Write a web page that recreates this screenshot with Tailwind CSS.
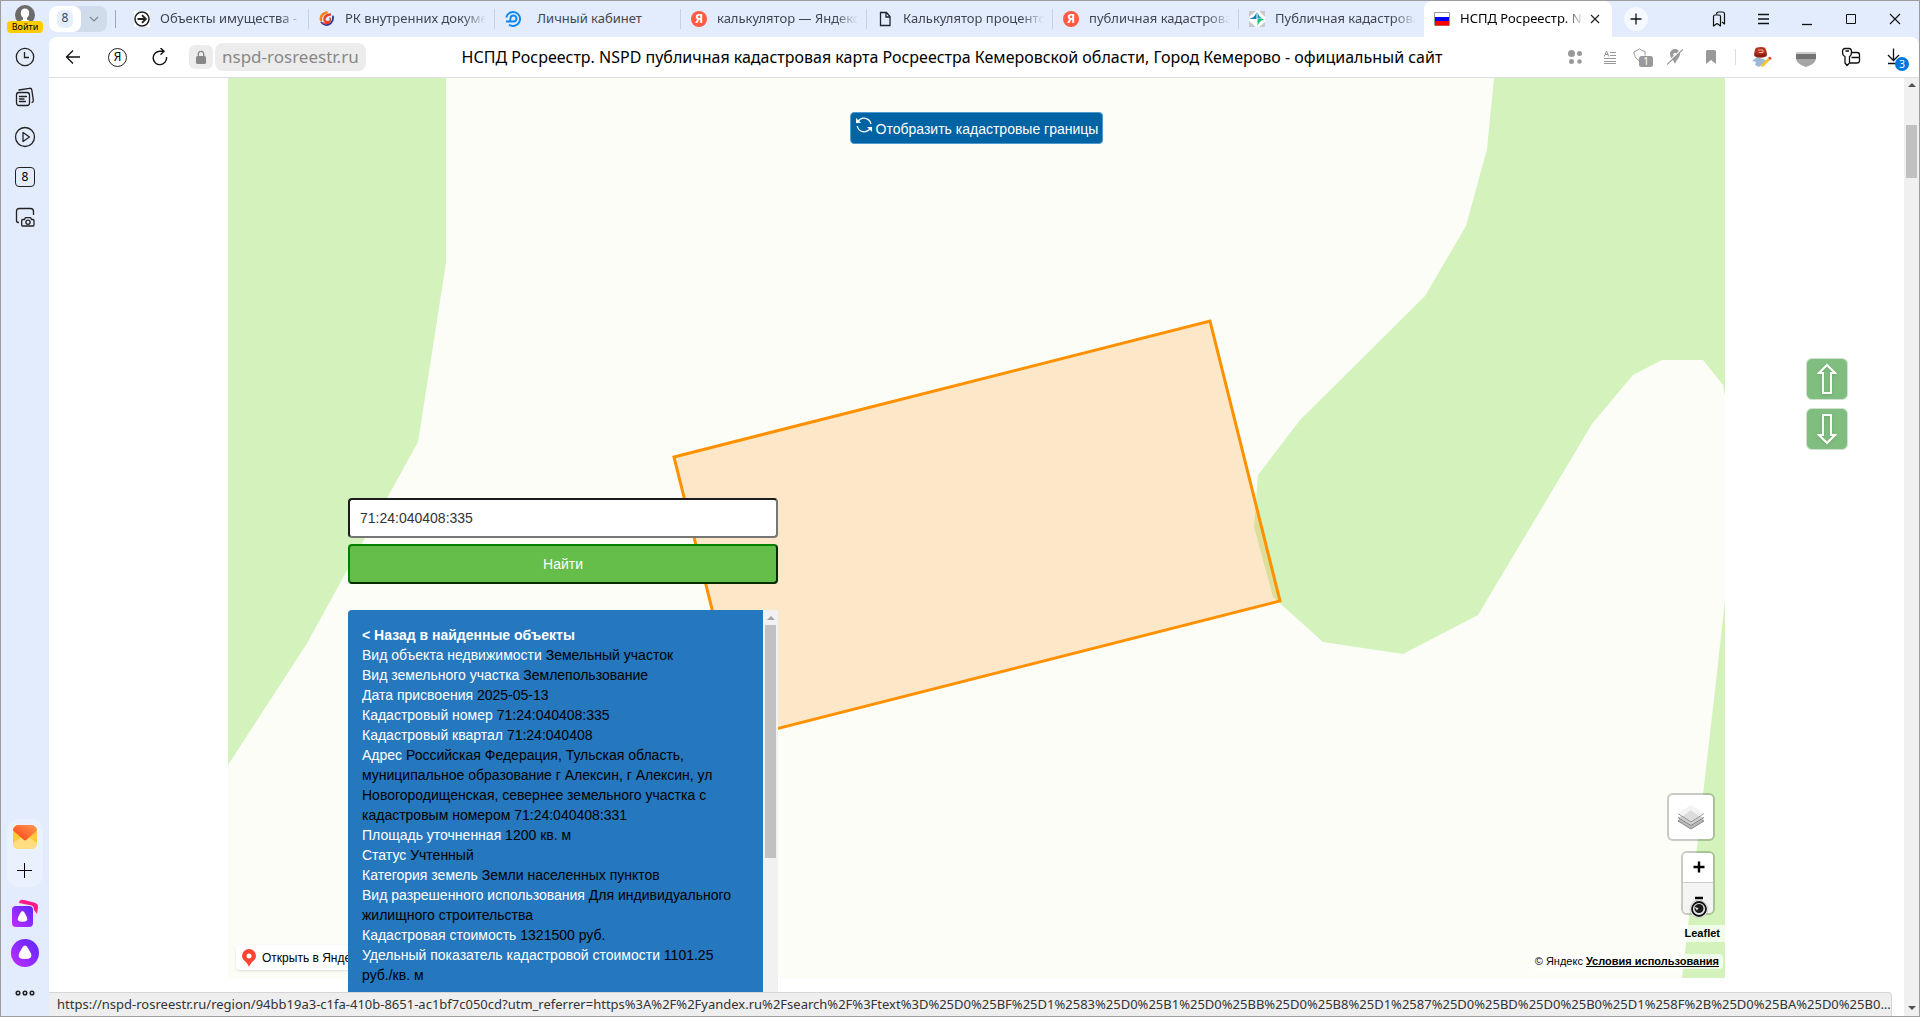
<!DOCTYPE html>
<html lang="ru">
<head>
  <meta charset="UTF-8" />
  <meta name="viewport" content="width=device-width, initial-scale=1.0" />
  <title>НСПД Росреестр. NSPD публичная кадастровая карта</title>
  <script src="https://cdn.jsdelivr.net/npm/@tailwindcss/browser@4"></script>
</head>
<body class="h-screen overflow-hidden bg-[#e2ecfd] border border-[#9d9d9d] flex font-['Noto_Sans',sans-serif] text-black">

  <!-- Sidebar -->
  <aside class="w-12 shrink-0 flex flex-col items-center">
    <button class="mt-1 flex flex-col items-center" aria-label="Войти">
      <svg class="w-5 h-5" viewBox="0 0 20 20"><circle cx="10" cy="10" r="10" fill="#6b6b6b"/><path d="M10 3.500c-2.700 0-4.200 1.900-4.200 4.500 0 2.200 1 3.900 2.200 4.800v1.700L4.500 16.500v3.500h11v-3.500L12 14.500v-1.700c1.200-.9 2.200-2.600 2.200-4.800 0-2.600-1.500-4.500-4.200-4.500z" fill="#fff"/></svg>
      <span class="-mt-1 w-9 h-3 rounded-sm bg-[#ffcc00] text-[9px] leading-3 text-center relative">Войти</span>
    </button>
    <nav class="mt-3 flex flex-col items-center gap-4">
      <button class="w-6 h-6 flex items-center justify-center" aria-label="История">
        <svg class="w-5 h-5" viewBox="0 0 20 20" fill="none" stroke="#222" stroke-width="1.300"><circle cx="10" cy="10" r="8.700"/><path d="M9.500 5v5.500H14"/></svg>
      </button>
      <button class="w-6 h-6 flex items-center justify-center" aria-label="Коллекции">
        <svg class="w-5 h-5" viewBox="0 0 20 20" fill="none" stroke="#222" stroke-width="1.300" stroke-linecap="round"><rect x="1.500" y="5.500" width="13" height="13" rx="2.500"/><path d="M4.500 9.500h7M4.500 12h4.500M4.500 14.500h6M4 3l10.500-1.700q2-.3 2.300 1.600l1.500 10.300q.2 1.800-1.300 2.200"/></svg>
      </button>
      <button class="w-6 h-6 flex items-center justify-center" aria-label="Видео">
        <svg class="w-6 h-6" viewBox="0 0 24 24" fill="none" stroke="#222" stroke-width="1.300" stroke-linejoin="round"><circle cx="12" cy="12" r="9.500"/><path d="M10 7.500v9l6.500-4.500z"/></svg>
      </button>
      <button class="w-5 h-5 my-0.5 rounded-sm border border-[#222] text-xs leading-4 text-center">8</button>
      <button class="w-6 h-6 flex items-center justify-center" aria-label="Скриншот">
        <svg class="w-6 h-6" viewBox="0 0 24 24" fill="none" stroke="#222" stroke-width="1.300" stroke-linejoin="round"><path d="M6 17.500H5.500q-2 0-2-2v-9q0-3 3-3h11q3 0 3 3v3.500"/><path d="M9.500 21q-.8 0-.8-1v-4.500q0-1 1-1h1.800l1-1.900h5l1 1.900h1.500q1 0 1 1V20q0 1-1 1z"/><circle cx="15" cy="17.200" r="2.100"/></svg>
      </button>
    </nav>
    <div class="mt-auto w-9 h-[68px] rounded-xl bg-[#eaf1fe] flex flex-col items-center pt-1.5 gap-3">
      <button aria-label="Почта">
        <svg class="w-6 h-6" viewBox="0 0 24 24"><defs><linearGradient id="mail" x1="1" y1="0" x2="0" y2="1"><stop offset="0" stop-color="#ff9a5a"/><stop offset="1" stop-color="#ff3d0a"/></linearGradient></defs><rect width="24" height="24" rx="6" fill="#ffc93a"/><path d="M0 18L12 10l12 8q0 6-6 6H6q-6 0-6-6z" fill="#ffdd80"/><path d="M0 5.500Q.5 0 6 0h12q5.500 0 6 5.500L13 15q-1 .8-2 0z" fill="url(#mail)"/></svg>
      </button>
      <button aria-label="Добавить"><svg class="w-5 h-5" viewBox="0 0 20 20" stroke="#000" stroke-width="1"><path d="M2 9.500h15M9.500 2v15"/></svg></button>
    </div>
    <div class="mt-3 flex flex-col items-center gap-3">
      <button aria-label="Алиса">
        <svg class="w-7 h-7" viewBox="0 0 28 28"><defs><linearGradient id="alice" x1="1" y1="0" x2="0" y2="1"><stop offset="0" stop-color="#5a28ff"/><stop offset="1" stop-color="#c22cff"/></linearGradient></defs><path d="M8 4q.5-4 5-3l10 2.500q4.500 1 4 5L26 15l-3-4q0-5-5-5z" fill="#ff1a8c"/><rect x="1" y="7" width="21" height="21" rx="4" fill="url(#alice)"/><path d="M11.500 12q-1.500 0-2.500 2.500l-2 4q-1.500 4.300 4.500 4.300t4.500-4.300l-2-4Q13 12 11.500 12z" fill="#fff"/></svg>
      </button>
      <button aria-label="Алиса, голос">
        <svg class="w-7 h-7" viewBox="0 0 28 28"><circle cx="14" cy="14" r="14" fill="url(#alice)"/><path d="M14 6.500q-1.800 0-3.200 3l-2.800 5q-2 5.500 6 5.500t6-5.500l-2.800-5q-1.400-3-3.200-3z" fill="#fff"/></svg>
      </button>
      <button class="mt-2 mb-[17px]" aria-label="Ещё">
        <svg class="w-5 h-3" viewBox="0 0 20 12" fill="none" stroke="#222" stroke-width="1.500"><circle cx="3" cy="6" r="1.800"/><circle cx="10" cy="6" r="1.800"/><circle cx="17" cy="6" r="1.800"/></svg>
      </button>
    </div>
  </aside>

  <div class="grow min-w-0 flex flex-col">
    <!-- Tabs -->
    <header class="h-9 shrink-0 flex items-center text-[13px] text-[#3f4750]">
      <div class="h-[26px] w-[58px] shrink-0 rounded-lg bg-[#d1dceb] flex">
        <button class="w-8 rounded-lg bg-white flex items-center justify-center text-xs"><span class="w-4 h-[18px] rounded-md bg-[#e4eefd]">8</span></button>
        <button class="grow flex items-center justify-center" aria-label="Список вкладок"><svg class="w-2.5 h-2.5" viewBox="0 0 10 10" fill="none" stroke="#7b8490" stroke-width="1.200"><path d="M1 3l4 4 4-4"/></svg></button>
      </div>
      <span class="ml-2 w-px h-[18px] bg-[#9aa5b5] shrink-0"></span>
      <button class="ml-2 flex-1 max-w-[184px] min-w-0 h-full flex items-center gap-2.5 pl-2.5">
        <svg class="w-4 h-4 shrink-0" viewBox="0 0 16 16" fill="none" stroke="#222"><rect width="16" height="16" fill="#fff" stroke="none"/><circle cx="8" cy="8" r="7" stroke-width="1.500"/><path d="M3.500 8h8M8 4.200L11.800 8 8 11.800" stroke-width="1.900"/></svg>
        <span class="grow overflow-hidden whitespace-nowrap text-left mr-1.5 [mask-image:linear-gradient(to_right,black_84%,transparent)]">Объекты имущества - С</span>
      </button>
      <button class="flex-1 max-w-[186px] min-w-0 h-full flex items-center gap-2.5 pl-2.5">
        <span class="-ml-2.5 w-px h-5 bg-[#c6d1e2] shrink-0"></span>
        <svg class="w-4 h-4 shrink-0" viewBox="0 0 16 16" fill="none" stroke-linecap="round"><path d="M7.500 1.500Q1 3.500 2 9" stroke="#f58220" stroke-width="2.600"/><path d="M11 3.500Q5 4.500 5.500 9q.8 2.500 3.500 2" stroke="#e8402a" stroke-width="2.400"/><path d="M2.500 11.500q4.500 5 9.500.5 2.500-2.700 2-6.500" stroke="#2b3990" stroke-width="1.800"/><path d="M4.500 12q4 1.500 6-1 1.500-2 .5-4" stroke="#e8402a" stroke-width="1.600"/></svg>
        <span class="grow overflow-hidden whitespace-nowrap text-left mr-2 [mask-image:linear-gradient(to_right,black_84%,transparent)]">РК внутренних докумен</span>
      </button>
      <button class="flex-1 max-w-[186px] min-w-0 h-full flex items-center gap-2.5 pl-2.5">
        <span class="-ml-2.5 w-px h-5 bg-[#c6d1e2] shrink-0"></span>
        <svg class="w-4 h-4 shrink-0" viewBox="0 0 16 16" fill="none" stroke="#0d87f2" stroke-width="1.900"><path d="M1.200 6.500A7 7 0 1 1 4 13.700"/><path d="M1 10.500h7.500a3 3 0 1 0-3-3q0 2.500-1.500 3"/></svg>
        <span class="grow overflow-hidden whitespace-nowrap text-left ml-1.5 mr-2">Личный кабинет</span>
      </button>
      <button class="flex-1 max-w-[186px] min-w-0 h-full flex items-center gap-2.5 pl-2.5">
        <span class="-ml-2.5 w-px h-5 bg-[#c6d1e2] shrink-0"></span>
        <span class="w-4 h-4 rounded-full bg-[#ff5a42] shrink-0 text-white text-xs leading-4 font-bold text-center">Я</span>
        <span class="grow overflow-hidden whitespace-nowrap text-left mr-2 [mask-image:linear-gradient(to_right,black_84%,transparent)]">калькулятор — Яндекс:</span>
      </button>
      <button class="flex-1 max-w-[186px] min-w-0 h-full flex items-center gap-2.5 pl-2.5">
        <span class="-ml-2.5 w-px h-5 bg-[#c6d1e2] shrink-0"></span>
        <svg class="w-4 h-4 shrink-0" viewBox="0 0 16 16" fill="none" stroke="#1d2733" stroke-width="1.300"><path d="M3.500 1.500h6l3.500 4v9H3.500zM9 1.500V6h4"/></svg>
        <span class="grow overflow-hidden whitespace-nowrap text-left mr-2 [mask-image:linear-gradient(to_right,black_84%,transparent)]">Калькулятор процентов</span>
      </button>
      <button class="flex-1 max-w-[186px] min-w-0 h-full flex items-center gap-2.5 pl-2.5">
        <span class="-ml-2.5 w-px h-5 bg-[#c6d1e2] shrink-0"></span>
        <span class="w-4 h-4 rounded-full bg-[#ff5a42] shrink-0 text-white text-xs leading-4 font-bold text-center">Я</span>
        <span class="grow overflow-hidden whitespace-nowrap text-left mr-2 [mask-image:linear-gradient(to_right,black_84%,transparent)]">публичная кадастровая</span>
      </button>
      <button class="flex-1 max-w-[186px] min-w-0 h-full flex items-center gap-2.5 pl-2.5">
        <span class="-ml-2.5 w-px h-5 bg-[#c6d1e2] shrink-0"></span>
        <svg class="w-4 h-4 shrink-0" viewBox="0 0 16 16"><rect width="16" height="16" fill="#fff"/><path d="M0 0h7L0 6zM16 0v6l-6-6zM0 16v-6l7 6zM16 16h-6l6-5z" fill="#c9c9c9"/><path d="M7.500 1v7H0q6-1.500 7.500-7z" fill="#0d7fc4"/><path d="M8.500 15.500V8H16q-6 1.500-7.500 7.500z" fill="#10c777"/><path d="M8.500 1v6.500H14q-4.500-1.500-5.500-6.500z" fill="#0a9ba8"/></svg>
        <span class="grow overflow-hidden whitespace-nowrap text-left mr-2 [mask-image:linear-gradient(to_right,black_84%,transparent)]">Публичная кадастровая</span>
      </button>
      <div class="flex-1 max-w-[188px] min-w-0 h-full rounded-t-lg bg-white flex items-center gap-2.5 pl-2.5 pr-3 text-black">
        <svg class="w-4 h-4 shrink-0" viewBox="0 0 16 16"><path d="M.5 1.500h15v13H.5z" fill="#fff" stroke="#999"/><path d="M1 6h14v4H1z" fill="#00f"/><path d="M1 10h14v4.500H1z" fill="#f00"/></svg>
        <span class="grow -mr-1 overflow-hidden whitespace-nowrap [mask-image:linear-gradient(to_right,black_84%,transparent)]">НСПД Росреестр. NSPD</span>
        <button aria-label="Закрыть вкладку"><svg class="w-2.5 h-2.5" viewBox="0 0 10 10" stroke="#222" stroke-width="1.200"><path d="M1 1l8 8M9 1L1 9"/></svg></button>
      </div>
      <button class="ml-3 w-6 h-6 rounded-full bg-[#f5f9ff] flex items-center justify-center shrink-0" aria-label="Новая вкладка"><svg class="w-3 h-3" viewBox="0 0 12 12" stroke="#111" stroke-width="1.300"><path d="M6 .5v11M.5 6h11"/></svg></button>
      <div class="ml-auto mr-4 flex items-center gap-7 shrink-0">
        <button aria-label="Закладки"><svg class="w-4 h-4" viewBox="0 0 16 16" fill="none" stroke="#111" stroke-width="1.200" stroke-linejoin="round"><path d="M2.500 5.500q0-1.500 1.500-1.500h4q1.500 0 1.500 1.500V15L6 12.500 2.500 15z"/><path d="M5.500 3.500q0-2.500 2-2.500h4q2 0 2 2v10l-2.500-2"/></svg></button>
        <button aria-label="Меню"><svg class="w-4 h-4" viewBox="0 0 16 16" stroke="#111" stroke-width="1.300"><path d="M3 3.500h11M3 8h11M3 12.500h11"/></svg></button>
        <button aria-label="Свернуть"><svg class="w-4 h-4" viewBox="0 0 16 16" stroke="#111" stroke-width="1.300"><path d="M3 13.500h10"/></svg></button>
        <button aria-label="Развернуть"><svg class="w-4 h-4" viewBox="0 0 16 16" fill="none" stroke="#111"><path d="M3.500 3.500h9v9h-9z"/></svg></button>
        <button aria-label="Закрыть"><svg class="w-4 h-4" viewBox="0 0 16 16" stroke="#111" stroke-width="1.100"><path d="M3 3l10 10M13 3L3 13"/></svg></button>
      </div>
    </header>

    <!-- Toolbar -->
    <div class="h-[41px] shrink-0 bg-white rounded-t-lg border-b border-[#dedede] flex items-center">
      <div class="flex-1 flex items-center">
        <button class="ml-4" aria-label="Назад"><svg class="w-4 h-4" viewBox="0 0 16 16" fill="none" stroke="#111" stroke-width="1.300"><path d="M15 8H1.500M8 1.500L1.500 8 8 14.500"/></svg></button>
        <button class="ml-[27px] w-[19px] h-[19px] rounded-full border border-[#222] text-xs leading-4 text-center" aria-label="Яндекс">Я</button>
        <button class="ml-6" aria-label="Обновить"><svg class="w-[18px] h-[18px]" viewBox="0 0 18 18" fill="none" stroke="#111" stroke-width="1.400"><path d="M15.500 9A6.700 6.700 0 1 1 9 3.200h3.500M9.500 0l3.500 3.200-3.500 3.500"/></svg></button>
        <button class="ml-5 w-6 h-6 rounded-md bg-[#ececec] flex items-center justify-center" aria-label="Защищено"><svg class="w-3 h-3.5" viewBox="0 0 12 14"><rect x="1" y="6" width="10" height="8" rx="1.500" fill="#888"/><path d="M3.300 6V4a2.700 2.700 0 0 1 5.400 0v2" fill="none" stroke="#888" stroke-width="1.300"/></svg></button>
        <button class="ml-0.5 h-7 px-[7px] rounded-lg bg-[#ececec] text-[#888] text-[17px] leading-7">nspd-rosreestr.ru</button>
      </div>
      <h1 class="mr-[52px] text-base whitespace-nowrap">НСПД Росреестр. NSPD публичная кадастровая карта Росреестра Кемеровской области, Город Кемерово - официальный сайт</h1>
      <div class="flex-1 flex items-center justify-end pr-3">
        <button aria-label="Расширения"><svg class="w-4 h-4" viewBox="0 0 16 16" fill="#999"><circle cx="4.500" cy="4.500" r="3.500"/><circle cx="12.500" cy="4.500" r="2.500"/><circle cx="4.500" cy="12.500" r="2.500"/><circle cx="12.500" cy="12.500" r="2.200"/></svg></button>
        <button class="ml-5" aria-label="Режим чтения"><svg class="w-3.5 h-4" viewBox="0 0 14 16" fill="none" stroke="#999" stroke-width="1"><path d="M7 3.500h6M7 6.500h6M1 9.500h12M1 12.500h12M1 14.500h12M1.200 7.500L3.500 2l2.300 5.500M2 5.500h3"/></svg></button>
        <button class="ml-4" aria-label="Защита"><svg class="w-5 h-5" viewBox="0 0 20 20" fill="none"><path d="M6.500 14Q.8 10.500 1 4.500q3.500-.5 5.500-2.700 2 2.200 5.500 2.700v4" stroke="#999"/><rect x="6" y="9" width="14" height="11" rx="2.500" fill="#999"/><text x="13" y="18" font-size="10" fill="#fff" text-anchor="middle">1</text></svg></button>
        <button class="ml-3.5" aria-label="Местоположение"><svg class="w-4 h-4" viewBox="0 0 16 16"><path d="M8 0a5 5 0 0 0-5 5c0 3 3 5 5 10 2-5 5-7 5-10a5 5 0 0 0-5-5z" fill="#999"/><circle cx="8" cy="5.500" r="1.700" fill="#fff"/><path d="M0 14L14.500.5" stroke="#fff" stroke-width="1.200"/><path d="M0 15.500L16 .5" stroke="#999" stroke-width="1.200"/></svg></button>
        <button class="ml-5" aria-label="В закладки"><svg class="w-4 h-4" viewBox="0 0 16 16"><path d="M3 2.500Q3 1 4.500 1h7Q13 1 13 2.500V15l-5-4-5 4z" fill="#999"/></svg></button>
        <span class="ml-4 w-px h-4 bg-[#ddd]"></span>
        <button class="ml-4" aria-label="Блокировщик"><svg class="w-5 h-5" viewBox="0 0 20 20"><path d="M0 14l5-4 9 3-3 4-4 3-4-2 1-3z" fill="#9dbbd6"/><path d="M4 .8q5.500-1.600 9 0 2.500 4 1.500 8.200-6 3-12 0Q1.500 4.500 4 .8z" fill="#b1341f"/><path d="M2.700 6q6 2.500 12 0l-.2 3q-6 3-12 0z" fill="#8f2113"/><path d="M6 3h5v2.500H7" fill="none" stroke="#f0b3a5"/><path d="M9.500 17.500l6.500-6.500 2 2-6.500 6.500-2.500.5z" fill="#f1c62c"/><path d="M16 11l1.800-1.500 2 2L18 13z" fill="#d6413a"/></svg></button>
        <button class="ml-6" aria-label="Карман"><svg class="w-5 h-5" viewBox="0 0 20 20"><path d="M0 6h20v5q0 6-10 9Q0 17 0 11z" fill="#a5a5a5"/><path d="M0 6h20v6H0z" fill="#737373"/><path d="M0 5h20v2H0z" fill="#ccc"/></svg></button>
        <button class="ml-[25px]" aria-label="Пароли"><svg class="w-5 h-5" viewBox="0 0 20 20" fill="none" stroke="#111" stroke-width="1.300" stroke-linejoin="round"><path d="M4 9.500Q1.500 8.500 1.500 5 1.500 1.500 4 1.500h4q2.500 0 2.500 3.500t-2 4.500v6.500L6 18.500 4 16zM4.500 4h3.500"/><path d="M10.500 5.500h5.500q2.500 0 2.500 2.500v5.500q0 2.500-2.500 2.500H9M10.500 10.500h8"/></svg></button>
        <button class="ml-[26px] relative w-5 h-5" aria-label="Загрузки"><svg class="w-5 h-5" viewBox="0 0 20 20" fill="none" stroke="#111" stroke-width="1.300"><path d="M6.500 1.500v12M1 8l5.500 5.500L12 8M1 16.500h8"/></svg><span class="absolute -right-0.5 -bottom-1 w-3.5 h-3.5 rounded-full bg-[#0077dd] text-white text-[10px] leading-3.5 text-center">3</span></button>
      </div>
    </div>

    <!-- Page -->
    <div class="grow min-h-0 relative flex bg-white font-['Liberation_Sans',sans-serif]">
      <main class="grow min-w-0 relative overflow-hidden px-[179px]">
        <section class="relative h-[900px] overflow-hidden bg-[#fcfdf7]">
          <svg class="w-full h-full" viewBox="0 0 1497 900" preserveAspectRatio="xMidYMid slice">
            <g fill="#d4f3bc">
              <path d="M0 0h218v185l-28 179-112 203L0 687z"/>
              <path d="M1266 0l-7 71-21 77-41 70-125 124-42 55-4 52 19 70 50 45 80 12 75-39 114-191 41-49 29-15h41l20 25 2 11V0z"/>
              <path d="M1497 522l-10 90-33 288h43z"/>
            </g>
            <path d="M446 379l536-136 70 280-536 136z" fill="#ff8f10" fill-opacity=".2" stroke="#ff9100" stroke-width="3"/>
          </svg>

          <button class="absolute top-[34px] left-1/2 -translate-x-1/2 h-8 px-1 rounded-sm border border-[#4f9bd0] bg-[#0063a3] text-white text-sm flex items-center gap-[3px] whitespace-nowrap">
            <svg class="w-[18px] h-[18px] mb-1.5" viewBox="0 0 18 18" fill="none" stroke="#fff" stroke-width="1.300"><path d="M3 5.500A7 7 0 0 1 15.800 8M15 12.500A7 7 0 0 1 2.200 10"/><path d="M1 2v5h5zM17 16v-5h-5z" fill="#fff" stroke="none"/></svg>
            <span class="mt-0.5">Отобразить кадастровые границы</span>
          </button>

          <a href="#" class="absolute left-2 bottom-2 h-[25px] pl-1.5 pr-3 rounded-sm bg-white shadow flex items-center gap-1.5 text-xs whitespace-nowrap">
            <svg class="w-3.5 h-[18px]" viewBox="0 0 14 18"><path d="M7 0a7 7 0 0 0-7 7c0 4.500 5 5 7 11 2-6 7-6.500 7-11a7 7 0 0 0-7-7z" fill="#ff4433"/><circle cx="7" cy="7" r="2.500" fill="#fff"/></svg>
            Открыть в Яндекс Картах
          </a>

          <div class="absolute right-2.5 bottom-[63px] flex flex-col items-end gap-2.5">
            <button class="w-12 h-12 rounded-md border-2 border-black/20 bg-white bg-clip-padding flex items-center justify-center" aria-label="Слои">
              <svg class="w-[26px] h-[26px]" viewBox="0 0 26 26"><path d="M0 17l13-8 13 8-13 8z" fill="#b9b9b9" stroke="#888"/><path d="M0 13.500l13-8 13 8-13 8z" fill="#cfcfcf" stroke="#fff"/><path d="M0 13.500l13 8 13-8" fill="none" stroke="#777"/><path d="M0 9.500L13 1l13 8.500L13 18z" fill="#dcdcdc" stroke="#fff"/><path d="M0 9.500L13 18l13-8.500" fill="none" stroke="#888"/><path d="M0 9.300L13 1l13 8.300-5 3L13 6l-8 6.300z" fill="#f3f3f3"/></svg>
            </button>
            <div class="w-[34px] rounded-md border-2 border-black/20 bg-clip-padding overflow-hidden">
              <button class="w-full h-[30px] bg-white border-b border-[#ccc] flex items-center justify-center" aria-label="Приблизить"><svg class="w-3 h-3 ml-0.5 mb-0.5" viewBox="0 0 12 12" stroke="#000" stroke-width="2.400"><path d="M6 .5v11M.5 6h11"/></svg></button>
              <button class="w-full h-[30px] bg-[#f4f4f4] flex items-center justify-center" aria-label="Отдалить"><svg class="w-3 h-3 ml-0.5" viewBox="0 0 12 12" stroke="#000" stroke-width="2.400"><path d="M2 6h8"/></svg></button>
            </div>
          </div>
          <!-- pointer -->
          <svg class="absolute right-4 bottom-[59px] w-5 h-5" viewBox="0 0 20 20"><circle cx="10" cy="10" r="9" fill="#fff" stroke="#aaa" stroke-width=".5"/><circle cx="10" cy="10" r="7" fill="#e5e5e5" stroke="#111" stroke-width="1.800"/><circle cx="10" cy="9.500" r="4.500" fill="#1a1a1a"/><path d="M5.500 8l4 1-1.500 2.500z" fill="#ddd"/></svg>

          <div class="absolute right-0 bottom-9 h-[17px] px-[5px] bg-white/70 text-[11px] leading-[17px] font-bold">Leaflet</div>
          <div class="absolute right-0.5 bottom-[9px] h-[15px] px-1 rounded-sm bg-white/70 text-[11px] leading-[15px]">© Яндекс <a href="#" class="font-bold underline">Условия использования</a></div>
        </section>

        <!-- Search -->
        <form class="absolute left-[299px] top-[420px] w-[430px] text-sm">
          <input type="text" value="71:24:040408:335" aria-label="Кадастровый номер" class="block w-full h-10 px-2.5 rounded-sm border-2 border-t-[#1c1c1c] border-l-[#1c1c1c] border-r-[#767676] border-b-[#767676] bg-white text-[#333]" />
          <button type="button" class="block mt-1.5 w-full h-10 rounded-sm border-2 border-t-[#008000] border-l-[#008000] border-r-[#002c00] border-b-[#002c00] bg-[#65bd4a] text-white">Найти</button>
          <div class="mt-[26px] flex h-[420px]">
            <div class="grow min-w-0 rounded-tl-sm bg-[#2577be] pl-3.5 pr-4 pt-[15px] leading-5 text-white overflow-hidden">
              <a href="#" class="font-bold">&lt; Назад в найденные объекты</a>
              <p>Вид объекта недвижимости <span class="text-black">Земельный участок</span></p>
              <p>Вид земельного участка <span class="text-black">Землепользование</span></p>
              <p>Дата присвоения <span class="text-black">2025-05-13</span></p>
              <p>Кадастровый номер <span class="text-black">71:24:040408:335</span></p>
              <p>Кадастровый квартал <span class="text-black">71:24:040408</span></p>
              <p>Адрес <span class="text-black">Российская Федерация, Тульская область, муниципальное образование г Алексин, г Алексин, ул Новогородищенская, севернее земельного участка с кадастровым номером 71:24:040408:331</span></p>
              <p>Площадь уточненная <span class="text-black">1200 кв. м</span></p>
              <p>Статус <span class="text-black">Учтенный</span></p>
              <p>Категория земель <span class="text-black">Земли населенных пунктов</span></p>
              <p>Вид разрешенного использования <span class="text-black">Для индивидуального жилищного строительства</span></p>
              <p>Кадастровая стоимость <span class="text-black">1321500 руб.</span></p>
              <p>Удельный показатель кадастровой стоимости <span class="text-black">1101.25 <span class="whitespace-nowrap">руб./кв. м</span></span></p>
            </div>
            <div class="w-[15px] shrink-0 bg-[#f1f1f1] flex flex-col items-center">
              <svg class="w-2 h-[15px]" viewBox="0 0 8 15"><path d="M0 10h8L4 6z" fill="#a3a3a3"/></svg>
              <div class="w-[11px] h-[233px] bg-[#c1c1c1]"></div>
            </div>
          </div>
        </form>

        <div class="absolute right-14 top-[280px] flex flex-col gap-2">
          <button class="w-[42px] h-[42px] rounded-md border border-[#d3e0d3] bg-[#80be80] flex items-center justify-center" aria-label="Вверх"><svg class="w-5 h-8 drop-shadow" viewBox="0 0 20 32" fill="none" stroke="#fff" stroke-width="2"><path d="M10 2L2 10h4v20h8V10h4z"/></svg></button>
          <button class="w-[42px] h-[42px] rounded-md border border-[#d3e0d3] bg-[#80be80] flex items-center justify-center" aria-label="Вниз"><svg class="w-5 h-8 drop-shadow" viewBox="0 0 20 32" fill="none" stroke="#fff" stroke-width="2"><path d="M10 30L2 22h4V2h8v20h4z"/></svg></button>
        </div>
      </main>

      <div class="w-[15px] shrink-0 bg-[#f0f0f0] flex flex-col items-center">
        <svg class="w-2 h-[15px]" viewBox="0 0 8 15"><path d="M0 9h8L4 5z" fill="#505050"/></svg>
        <div class="mt-8 w-[11px] h-[53px] bg-[#c1c1c1]"></div>
        <svg class="mt-auto w-2 h-[15px]" viewBox="0 0 8 15"><path d="M0 5h8L4 9z" fill="#505050"/></svg>
      </div>

      <div class="absolute left-0 right-[27px] bottom-0 h-6 pl-2 rounded-tr-sm border-t border-r border-[#d5d5d5] bg-[#eee] text-[#333] font-['Noto_Sans',sans-serif] text-[13px] leading-[22px] truncate">https://nspd-rosreestr.ru/region/94bb19a3-c1fa-410b-8651-ac1bf7c050cd?utm_referrer=https%3A%2F%2Fyandex.ru%2Fsearch%2F%3Ftext%3D%25D0%25BF%25D1%2583%25D0%25B1%25D0%25BB%25D0%25B8%25D1%2587%25D0%25BD%25D0%25B0%25D1%258F%2B%25D0%25BA%25D0%25B0%25D0%25B4%25D0%25B0%25D1%2581%25D1%2582%25D1%2580</div>
    </div>
  </div>
</body>
</html>
